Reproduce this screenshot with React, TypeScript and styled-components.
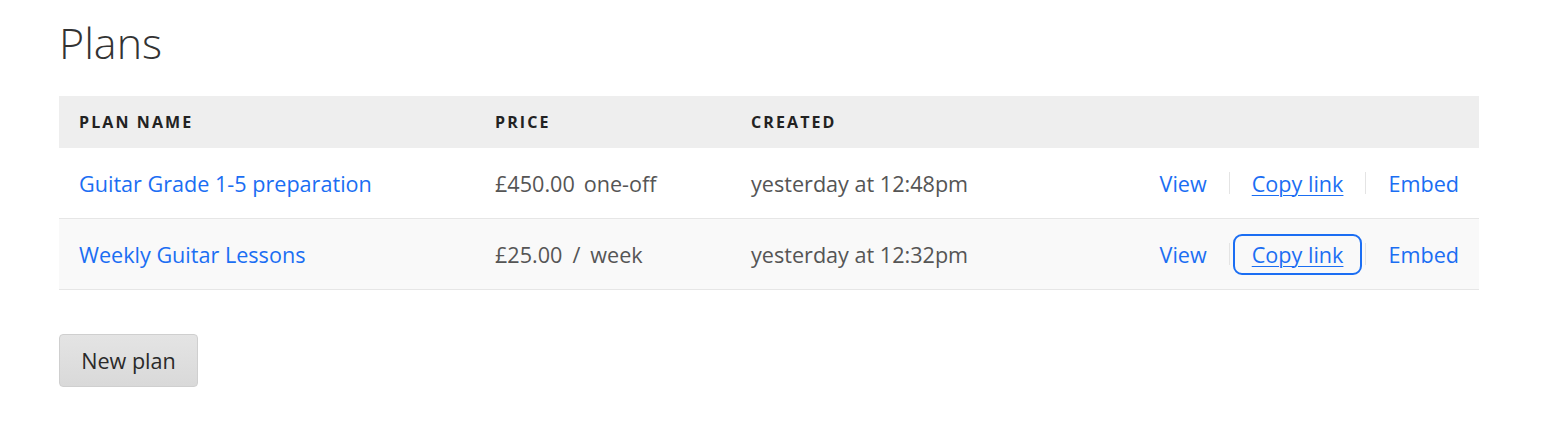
import React from "react";
import styled, { createGlobalStyle, css } from "styled-components";

const Global = createGlobalStyle`
  html, body { margin: 0; padding: 0; background: #fff; }
  body { font-family: "Open Sans", "Liberation Sans", sans-serif; color: #555; }
`;

const Page = styled.main`
  padding: 14px 89px 0 59px;
`;

const Title = styled.h1`
  margin: 0 0 24px 0;
  font-size: 43px;
  font-weight: 300;
  line-height: 58px;
  color: #333;
`;

const Table = styled.div`
  display: grid;
  grid-template-columns: 416px 256px 1fr auto;
  width: 1420px;
`;

const HeadCell = styled.div`
  background: #eee;
  height: 52px;
  display: flex;
  align-items: center;
  padding: 0 20px;
  font-size: 16px;
  font-weight: 700;
  letter-spacing: 2.1px;
  color: #222;
  text-transform: uppercase;
`;

const Cell = styled.div<{ $striped?: boolean; $actions?: boolean }>`
  height: 70px;
  display: flex;
  align-items: center;
  padding: ${(p) => (p.$actions ? "0 1px 0 20px" : "0 20px")};
  justify-content: ${(p) => (p.$actions ? "flex-end" : "flex-start")};
  background: ${(p) => (p.$striped ? "#f9f9f9" : "#fff")};
  border-bottom: 1px solid #e6e6e6;
  font-size: 21.6px;
  color: #555;
  white-space: nowrap;
`;

const NameLink = styled.a`
  color: #1b6ef3;
  text-decoration: none;
`;

const Spacer = styled.span<{ $w: number }>`
  display: inline-block;
  width: ${(p) => p.$w}px;
`;

const ActionLink = styled.a<{ $underline?: boolean; $focused?: boolean }>`
  color: #1b6ef3;
  text-decoration: ${(p) => (p.$underline ? "underline" : "none")};
  text-underline-offset: 3px;
  text-decoration-thickness: 1px;
  padding: 0 17px;
  line-height: 37px;
  border: 2px solid transparent;
  border-radius: 9px;
  ${(p) =>
    p.$focused &&
    css`
      border-color: #1b6ef3;
    `}
`;

const Sep = styled.span`
  width: 1px;
  height: 22px;
  background: #e4e4e4;
  margin: 0 3px;
`;

const Button = styled.button`
  margin-top: 44px;
  width: 139px;
  height: 53px;
  border: 1px solid #cfcfcf;
  border-radius: 4px;
  background: linear-gradient(#e4e4e4, #d9d9d9);
  font-family: "Open Sans", "Liberation Sans", sans-serif;
  font-size: 21.6px;
  color: #2a2a2a;
  padding: 0;
`;

type Plan = { name: string; price: React.ReactNode; created: string; focus?: boolean };

const plans: Plan[] = [
  {
    name: "Guitar Grade 1-5 preparation",
    price: (
      <>
        £450.00<Spacer $w={9} />one-off
      </>
    ),
    created: "yesterday at 12:48pm",
  },
  {
    name: "Weekly Guitar Lessons",
    price: (
      <>
        £25.00<Spacer $w={10} />/<Spacer $w={10} />week
      </>
    ),
    created: "yesterday at 12:32pm",
    focus: true,
  },
];

export default function App() {
  return (
    <>
      <Global />
      <Page>
        <Title>Plans</Title>
        <Table>
          <HeadCell>Plan name</HeadCell>
          <HeadCell>Price</HeadCell>
          <HeadCell>Created</HeadCell>
          <HeadCell />
          {plans.map((p, i) => {
            const s = i % 2 === 1;
            return (
              <React.Fragment key={p.name}>
                <Cell $striped={s}>
                  <NameLink href="#">{p.name}</NameLink>
                </Cell>
                <Cell $striped={s}>{p.price}</Cell>
                <Cell $striped={s}>{p.created}</Cell>
                <Cell $striped={s} $actions>
                  <ActionLink href="#">View</ActionLink>
                  <Sep />
                  <ActionLink href="#" $underline $focused={p.focus}>
                    Copy link
                  </ActionLink>
                  <Sep />
                  <ActionLink href="#">Embed</ActionLink>
                </Cell>
              </React.Fragment>
            );
          })}
        </Table>
        <Button>New plan</Button>
      </Page>
    </>
  );
}
